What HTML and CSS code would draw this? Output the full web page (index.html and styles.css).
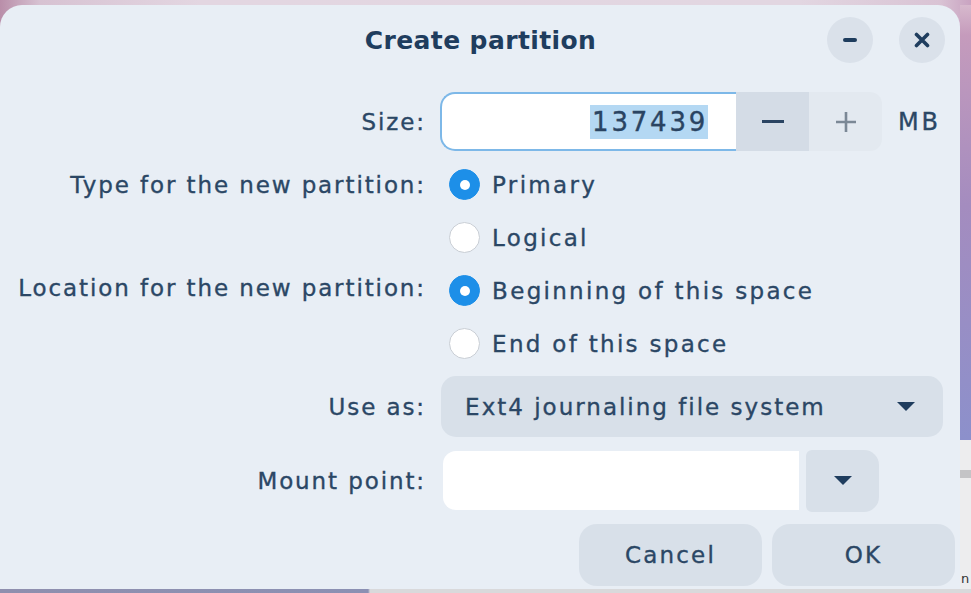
FILE: index.html
```html
<!DOCTYPE html>
<html lang="en">
<head>
<meta charset="utf-8">
<title>Create partition</title>
<link rel="stylesheet" href="styles.css">
</head>
<body>
<div class="screen">
  <div class="main">
    <div class="dialog">
      <div class="header">
        <div></div>
        <h1 class="title">Create partition</h1>
        <div class="win-btns">
          <button class="win-btn" aria-label="Minimize"><span class="min-bar"></span></button>
          <button class="win-btn" aria-label="Close">
            <svg width="16" height="16" viewBox="0 0 16 16"><path d="M2.5 2.5 L13.5 13.5 M13.5 2.5 L2.5 13.5" stroke="#1f3d5e" stroke-width="3.6" stroke-linecap="round"/></svg>
          </button>
        </div>
      </div>

      <div class="form">
        <div class="row row-size">
          <div class="label">Size:</div>
          <div class="ctrl spin">
            <div class="spin-entry"><span class="sel">137439</span></div>
            <button class="spin-btn spin-minus" aria-label="Decrease"><span class="minus-bar"></span></button>
            <button class="spin-btn spin-plus" aria-label="Increase">
              <svg width="22" height="22" viewBox="0 0 22 22"><path d="M11 1 V21 M1 11 H21" stroke="#7b8896" stroke-width="2.6"/></svg>
            </button>
            <span class="unit">MB</span>
          </div>
        </div>

        <div class="row row-radio">
          <div class="label label-top">Type for the new partition:</div>
          <div class="radios">
            <label class="radio-row"><span class="radio on"></span>Primary</label>
            <label class="radio-row"><span class="radio"></span>Logical</label>
          </div>
        </div>

        <div class="row row-radio">
          <div class="label label-top label-loc">Location for the new partition:</div>
          <div class="radios">
            <label class="radio-row"><span class="radio on"></span>Beginning of this space</label>
            <label class="radio-row"><span class="radio"></span>End of this space</label>
          </div>
        </div>

        <div class="row row-use">
          <div class="label">Use as:</div>
          <div class="combo">
            <span>Ext4 journaling file system</span>
            <svg class="tri" width="18" height="10" viewBox="0 0 18 10"><path d="M0 0 H18 L9 9 Z" fill="#1f3d5e"/></svg>
          </div>
        </div>

        <div class="row row-mount">
          <div class="label">Mount point:</div>
          <div class="mount">
            <div class="mount-entry"></div>
            <button class="mount-btn" aria-label="Choose mount point">
              <svg width="18" height="10" viewBox="0 0 18 10"><path d="M0 0 H18 L9 9 Z" fill="#1f3d5e"/></svg>
            </button>
          </div>
        </div>

        <div class="actions">
          <button class="btn">Cancel</button>
          <button class="btn">OK</button>
        </div>
      </div>
    </div>
    <div class="side">
      <div class="side-top"></div>
      <div class="side-bottom"><span class="side-line"></span><span class="side-text">n</span></div>
    </div>
  </div>
  <div class="bottom"></div>
</div>
</body>
</html>
```

FILE: styles.css
```css
* { box-sizing: border-box; }

html, body {
  margin: 0;
  padding: 0;
}

body {
  width: 971px;
  height: 593px;
  overflow: hidden;
  font-family: "DejaVu Sans", Verdana, sans-serif;
  color: #2b4765;
  -webkit-text-stroke: 0.35px currentColor;
}

.screen {
  width: 971px;
  height: 593px;
  padding-top: 5px;
  display: flex;
  flex-direction: column;
  background: linear-gradient(to right, #b98ea9 0px, #d7c2d2 40px, #e3d6e1 200px, #e2d6e1 800px, #d9c3d4 940px, #c9a3c1 971px);
}

.main {
  display: flex;
  height: 584px;
}

.dialog {
  width: 960px;
  height: 584px;
  background: #e8eef5;
  border-radius: 22px 22px 0 0;
  display: flex;
  flex-direction: column;
}

/* header */
.header {
  height: 70px;
  display: grid;
  grid-template-columns: 1fr auto 1fr;
  align-items: center;
}

.title {
  margin: 0;
  font-size: 25px;
  font-weight: bold;
  color: #1f3d5e;
  letter-spacing: 0.4px;
  -webkit-text-stroke: 0;
  padding-left: 1px;
}

.win-btns {
  display: flex;
  justify-content: flex-end;
  gap: 26px;
  padding-right: 15px;
}

.win-btn {
  width: 46px;
  height: 46px;
  border-radius: 50%;
  border: none;
  background: #dae1ea;
  padding: 0;
  display: flex;
  align-items: center;
  justify-content: center;
}

.min-bar {
  display: block;
  width: 14px;
  height: 4px;
  border-radius: 2px;
  background: #1f3d5e;
}

/* form */
.form {
  display: flex;
  flex-direction: column;
  padding-top: 17px;
}

.row {
  display: flex;
  gap: 15px;
}

.label {
  width: 426px;
  flex: none;
  display: flex;
  align-items: center;
  justify-content: flex-end;
  font-size: 23px;
  letter-spacing: 1.9px;
  margin-right: -1.9px;
  white-space: nowrap;
}

.label-top {
  align-self: flex-start;
  height: 53px;
}

.label-loc {
  height: 47px;
}

/* size spin */
.row-size {
  height: 59px;
}

.spin {
  display: flex;
  align-items: stretch;
  margin-left: 1px;
}

.spin-entry {
  width: 296px;
  background: #ffffff;
  border: 2px solid #7db8e8;
  border-right: none;
  border-radius: 15px 0 0 15px;
  display: flex;
  align-items: center;
  justify-content: flex-end;
  padding-right: 28px;
}

.sel {
  background: #b4d8f3;
  font-size: 26px;
  letter-spacing: 2.8px;
  color: #2a4462;
  padding: 1px 0 1px 2px;
  line-height: 32px;
}

.spin-btn {
  width: 73px;
  border: none;
  padding: 0;
  display: flex;
  align-items: center;
  justify-content: center;
}

.spin-minus {
  background: #d4dce6;
}

.spin-plus {
  background: #e3e9f0;
  border-radius: 0 12px 12px 0;
}

.minus-bar {
  display: block;
  width: 22px;
  height: 3px;
  background: #2a4462;
}

.unit {
  align-self: center;
  margin-left: 16px;
  font-size: 24px;
  letter-spacing: 2.6px;
}

/* radios */
.row-radio {
  height: 106px;
}

.row-size + .row-radio {
  margin-top: 7px;
}

.radios {
  display: flex;
  flex-direction: column;
  margin-left: 10px;
}

.radio-row {
  height: 53px;
  display: flex;
  align-items: center;
  gap: 12px;
  font-size: 23px;
  letter-spacing: 2.3px;
  white-space: nowrap;
}

.radio {
  width: 31px;
  height: 31px;
  border-radius: 50%;
  background: #ffffff;
  border: 1.5px solid #c9ced5;
  flex: none;
  display: flex;
  align-items: center;
  justify-content: center;
}

.radio.on {
  background: #1d8fe8;
  border-color: #1d8fe8;
}

.radio.on::after {
  content: "";
  width: 10px;
  height: 10px;
  border-radius: 50%;
  background: #ffffff;
}

/* use as combo */
.row-use {
  height: 61px;
  margin-top: 6px;
}

.combo {
  width: 502px;
  margin-left: 2px;
  background: #d8e0e9;
  border-radius: 15px;
  display: flex;
  align-items: center;
  justify-content: space-between;
  padding: 0 28px 0 24px;
  font-size: 23px;
  letter-spacing: 2px;
  white-space: nowrap;
}

/* mount */
.row-mount {
  height: 62px;
  margin-top: 13px;
}

.mount {
  display: flex;
  align-items: stretch;
  gap: 7px;
  margin-left: 4px;
}

.mount-entry {
  width: 356px;
  margin: 1px 0 2px;
  background: #ffffff;
  border-radius: 13px 0 0 13px;
}

.mount-btn {
  width: 73px;
  border: none;
  background: #d8e0e9;
  border-radius: 6px 15px 15px 6px;
  display: flex;
  align-items: center;
  justify-content: center;
  padding: 0;
}

/* action buttons */
.actions {
  display: flex;
  justify-content: flex-end;
  gap: 10px;
  margin-top: 12px;
  padding-right: 5px;
}

.btn {
  width: 183px;
  height: 62px;
  border: none;
  border-radius: 18px;
  background: #d8e0e9;
  font-family: "DejaVu Sans", Verdana, sans-serif;
  font-size: 23px;
  letter-spacing: 2.2px;
  color: #2b4765;
  -webkit-text-stroke: 0.35px currentColor;
}

/* desktop bits outside the dialog */
.side {
  width: 11px;
  display: flex;
  flex-direction: column;
}

.side-top {
  height: 435px;
  background: linear-gradient(to bottom, #d7b9cd 0px, #c59bbc 30px, #a48cbf 200px, #8c90cb 435px);
}

.side-bottom {
  flex: 1;
  background: #ededee;
  display: flex;
  flex-direction: column;
  overflow: hidden;
}

.side-line {
  display: block;
  height: 8px;
  margin-top: 30px;
  background: #c4c4c6;
}

.side-text {
  margin-top: auto;
  margin-bottom: 2px;
  margin-left: 1px;
  font-size: 13px;
  line-height: 16px;
  color: #333;
  -webkit-text-stroke: 0;
}

.bottom {
  height: 4px;
  background: linear-gradient(to right, #8f8fae 0px, #8b90b3 368px, #d9d9db 370px, #d9d9db 971px);
}
```
